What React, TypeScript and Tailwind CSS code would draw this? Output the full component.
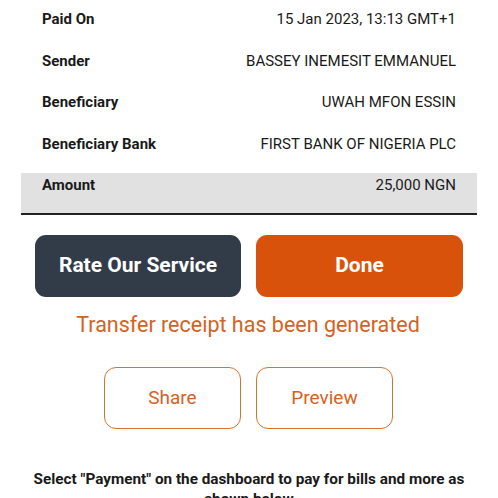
const rows = [
    { label: "Paid On", value: "15 Jan 2023, 13:13 GMT+1" },
    { label: "Sender", value: "BASSEY INEMESIT EMMANUEL" },
    { label: "Beneficiary", value: "UWAH MFON ESSIN" },
    { label: "Beneficiary Bank", value: "FIRST BANK OF NIGERIA PLC" },
];

export default function App() {
    return (
        <div
            className="w-[498px] h-[498px] overflow-hidden bg-white text-[#1a1a1a]"
            style={{ fontFamily: "Roboto, 'Liberation Sans', sans-serif" }}
        >
            <div className="pt-[7px] px-[21px]">
                {rows.map((r) => (
                    <div
                        key={r.label}
                        className="h-[41.5px] pt-[3px] pl-[21px] pr-[21px] flex justify-between text-[15px] leading-[18px]"
                    >
                        <span className="font-bold">{r.label}</span>
                        <span>{r.value}</span>
                    </div>
                ))}
                <div className="h-[42px] pt-[3px] pl-[21px] pr-[21px] flex justify-between text-[15px] leading-[18px] bg-[#e1e1e1] border-b-2 border-[#222]">
                    <span className="font-bold">Amount</span>
                    <span>25,000 NGN</span>
                </div>
            </div>

            <div className="flex gap-[15px] pl-[35px] mt-[20px]">
                <button className="w-[206px] h-[62px] rounded-[11px] bg-[#323c48] text-white font-bold text-[21px]">
                    Rate Our Service
                </button>
                <button className="w-[207px] h-[62px] rounded-[11px] bg-[#d9520b] text-white font-bold text-[21px]">
                    Done
                </button>
            </div>

            <p className="text-center text-[21.5px] leading-[24px] text-[#d4621f] mt-[16px] pr-[2px]">
                Transfer receipt has been generated
            </p>

            <div className="flex gap-[15px] pl-[104px] mt-[30px]">
                <button className="w-[137px] h-[62px] rounded-[12px] border-[1.5px] border-[#d8722f] text-[#d4621f] text-[19px]">
                    Share
                </button>
                <button className="w-[137px] h-[62px] rounded-[12px] border-[1.5px] border-[#d8722f] text-[#d4621f] text-[19px]">
                    Preview
                </button>
            </div>

            <p className="mt-[40px] px-[28px] text-center font-bold text-[15.3px] leading-[20px]">
                Select "Payment" on the dashboard to pay for bills and more as shown below
            </p>
        </div>
    );
}
